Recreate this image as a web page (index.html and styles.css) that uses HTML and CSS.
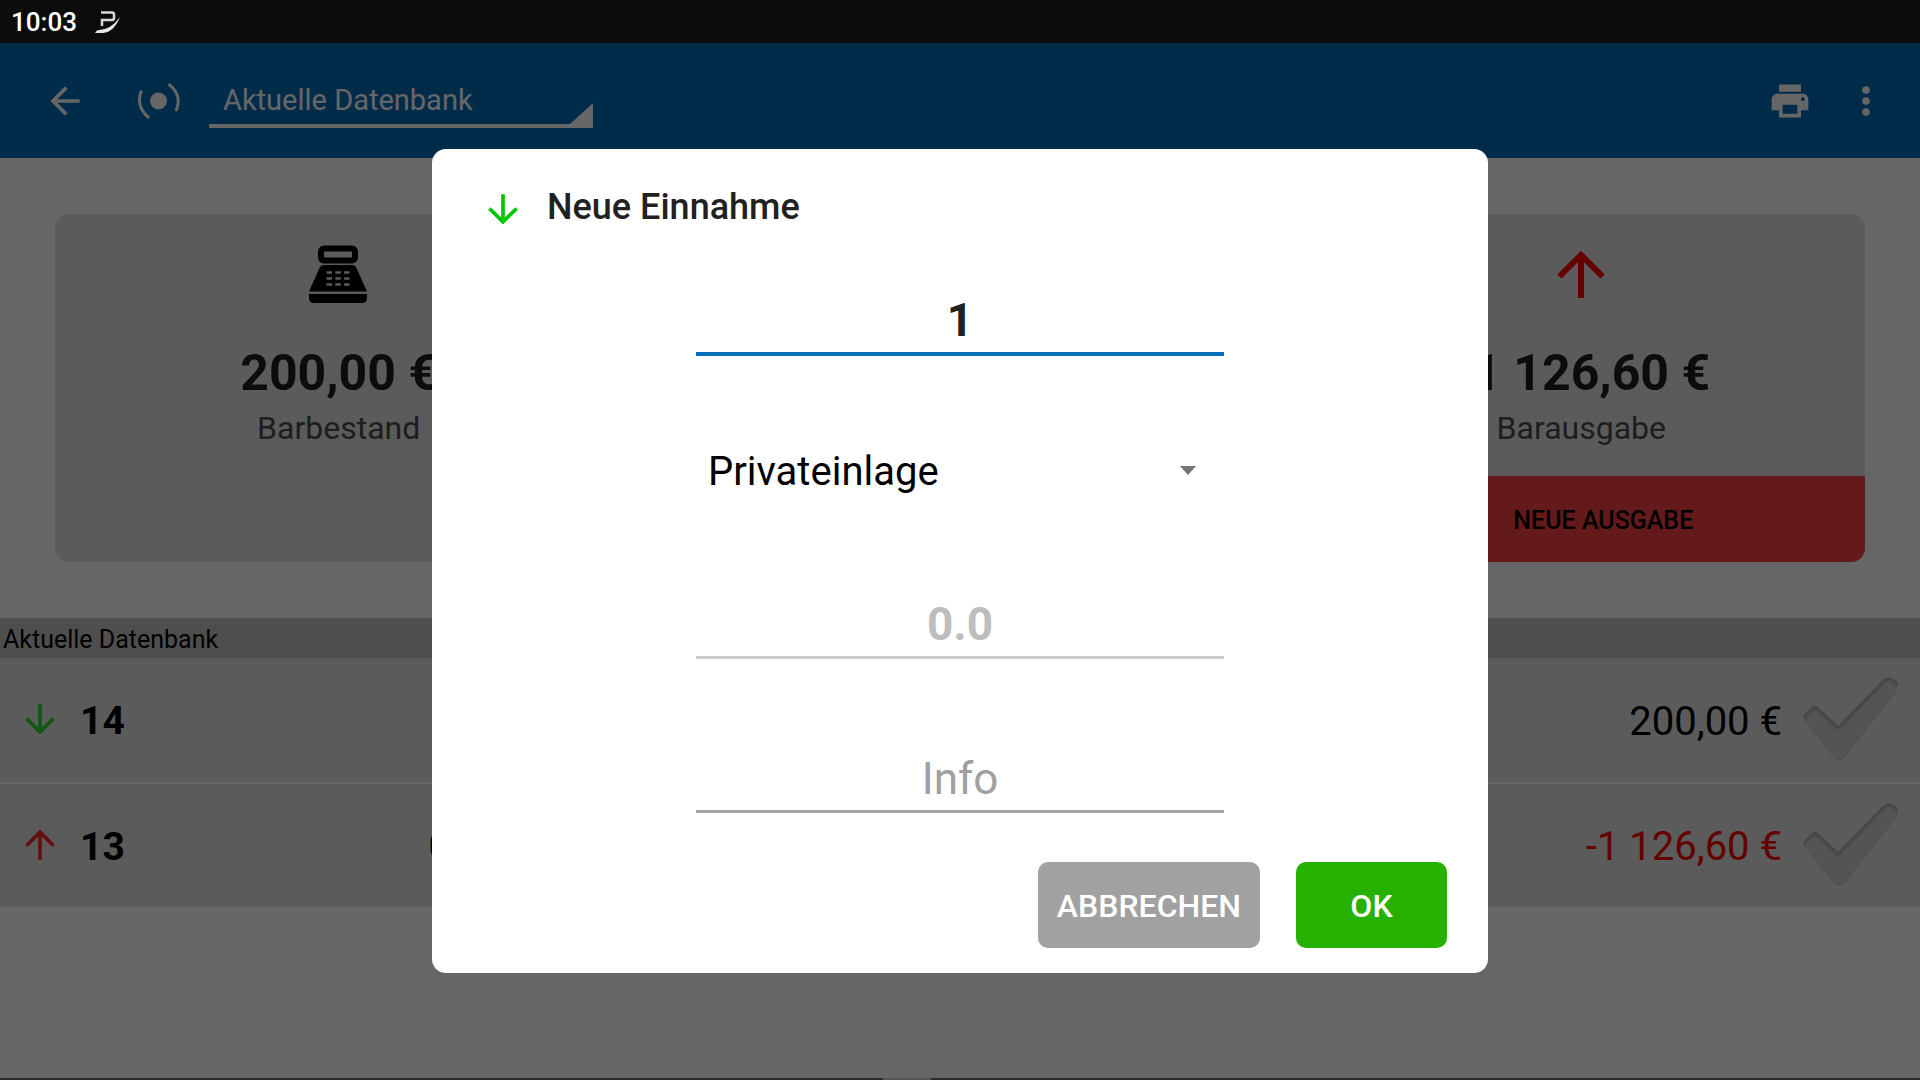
FILE: index.html
```html
<!DOCTYPE html>
<html lang="de">
<head>
<meta charset="utf-8">
<meta name="viewport" content="width=device-width, initial-scale=1">
<title>Neue Einnahme</title>
<link rel="stylesheet" href="styles.css">
</head>
<body>
<svg class="defs" aria-hidden="true">
  <defs>
    <symbol id="arrow-down" viewBox="0 0 24 24"><path d="M12 4V19M4.6 11.7 12 19 19.400 11.700" fill="none" stroke="currentColor" stroke-width="2"/></symbol>
    <symbol id="arrow-up" viewBox="0 0 24 24"><path d="M12 20V5M4.600 12.400 12 5 19.400 12.400" fill="none" stroke="currentColor" stroke-width="2"/></symbol>
    <filter id="soft" x="-20%" y="-20%" width="140%" height="140%"><feGaussianBlur stdDeviation="1.500"/></filter>
    <clipPath id="check-clip"><path d="M2 44Q-1 40 2 37L8 31Q12 27 16 31L35 49 80 3Q86-2 92 3 98 8 93 15L42 80Q36 86 30 80Z"/></clipPath>
    <symbol id="check" viewBox="-2 -2 102 90">
      <path d="M31 82Q37 88 43 82L96 15" fill="none" stroke="#eaeaea" stroke-width="2" filter="url(#soft)"/>
      <g clip-path="url(#check-clip)">
        <rect x="-2" y="-2" width="102" height="90" fill="#d3d3d3"/>
        <path d="M-1 42 2 37 8 31Q12 27 16 31L35 49 80 3Q86-2 92 3L96 8" fill="none" stroke="#acacac" stroke-width="6" filter="url(#soft)"/>
        <path d="M0 42 30 81Q36 86 42 80L96 11" fill="none" stroke="#c4c4c4" stroke-width="2" filter="url(#soft)"/>
      </g>
    </symbol>
  </defs>
</svg>

<header class="status">
  <span>10:03</span>
  <svg class="status-logo" viewBox="0 0 26 22" aria-hidden="true">
    <path d="M6 1.500H17Q19 1.500 19 3.500V7Q19 9 17 9H7V15" fill="none" stroke="#d8d8d8" stroke-width="2.500"/>
    <path d="M0 22 2 19.500Q16 19 25 6 19 21 8 22Z" fill="#e8e8e8"/>
  </svg>
</header>

<div class="app">
  <nav class="toolbar">
    <button class="icon-button" type="button" aria-label="Zurück">
      <svg class="icon" viewBox="0 0 24 24"><path d="M20 11H7.830l5.590-5.590L12 4l-8 8 8 8 1.410-1.410L7.830 13H20z" fill="currentColor"/></svg>
    </button>
    <svg class="icon icon-signal" viewBox="0 0 44 44" aria-hidden="true">
      <circle cx="21.500" cy="22" r="8.500" fill="currentColor"/>
      <path d="M4.500 11.500Q-2 27 12 39M31.500 5Q46 16 39 32" fill="none" stroke="currentColor" stroke-width="3"/>
    </svg>
    <div class="spinner">
      <select class="spinner-select" aria-label="Datenbank"><option>Aktuelle Datenbank</option></select>
      <svg class="spinner-corner" viewBox="0 0 24 25" aria-hidden="true"><path d="M0 22 24 0V23Q24 25 22 25H0Z" fill="currentColor"/></svg>
    </div>
    <div class="actions">
      <button class="icon-button" type="button" aria-label="Drucken">
        <svg class="icon" viewBox="0 0 24 24"><path d="M19 8H5c-1.660 0-3 1.340-3 3v6h4v4h12v-4h4v-6c0-1.660-1.340-3-3-3zm-3 11H8v-5h8v5zm3-7c-.550 0-1-.450-1-1s.450-1 1-1 1 .450 1 1-.450 1-1 1zm-1-9H6v4h12V3z" fill="currentColor"/></svg>
      </button>
      <button class="icon-button" type="button" aria-label="Menü">
        <svg class="icon" viewBox="0 0 24 24"><g fill="currentColor"><circle cx="12" cy="6" r="2.100"/><circle cx="12" cy="12" r="2.100"/><circle cx="12" cy="18" r="2.100"/></g></svg>
      </button>
    </div>
  </nav>

  <main class="content">
    <section class="cards">
      <article class="card">
        <svg class="card-icon" viewBox="0 0 60 60" aria-hidden="true">
          <rect x="12" y="3.500" width="34" height="12" rx="3" fill="none" stroke="#000" stroke-width="6"/>
          <path d="M15 20H43Q46 20 47.500 23L58 46.500H0L10.500 23Q12 20 15 20Z"/>
          <path d="M0 49H58V53Q58 58 53 58H5Q0 58 0 53Z"/>
          <path d="M17.500 27.500H40.500M17.500 33.500H40.500M17.500 39.500H40.500" stroke="#e4e4e4" stroke-width="2.500" stroke-dasharray="5.500 3.300"/>
        </svg>
        <strong class="card-value">200,00 €</strong>
        <span class="card-label">Barbestand</span>
      </article>
      <article class="card"></article>
      <article class="card">
        <svg class="card-icon card-icon-out" viewBox="0 0 60 60" aria-hidden="true"><path d="M30 53V11M8.500 31.500 30 10 51.500 31.500" fill="none" stroke="currentColor" stroke-width="6"/></svg>
        <strong class="card-value">-1 126,60 €</strong>
        <span class="card-label">Barausgabe</span>
        <button class="card-button" type="button">NEUE AUSGABE</button>
      </article>
    </section>

    <h2 class="list-title">Aktuelle Datenbank</h2>
    <table class="list">
      <colgroup><col class="col-icon"><col class="col-number"><col class="col-date"><col><col class="col-check"></colgroup>
      <tbody>
        <tr>
          <td class="cell-icon"><svg class="row-icon row-in"><use href="#arrow-down"/></svg></td>
          <th class="cell-number" scope="row">14</th>
          <td class="cell-date">1</td>
          <td class="cell-amount">200,00 €</td>
          <td class="cell-check"><svg class="check"><use href="#check"/></svg></td>
        </tr>
        <tr>
          <td class="cell-icon"><svg class="row-icon row-out"><use href="#arrow-up"/></svg></td>
          <th class="cell-number" scope="row">13</th>
          <td class="cell-date">0</td>
          <td class="cell-amount cell-negative">-1 126,60 €</td>
          <td class="cell-check"><svg class="check"><use href="#check"/></svg></td>
        </tr>
      </tbody>
    </table>
  </main>

  <div class="scrim">
    <form class="dialog" role="dialog" aria-labelledby="dialog-title">
      <div class="dialog-head">
        <svg class="icon dialog-icon"><use href="#arrow-down"/></svg>
        <h1 class="dialog-title" id="dialog-title">Neue Einnahme</h1>
      </div>
      <div class="fields">
        <input class="field field-active" type="text" value="1" aria-label="Nummer">
        <div class="choice">
          <select class="choice-select" aria-label="Art"><option>Privateinlage</option></select>
          <svg class="choice-arrow" viewBox="0 0 16 9" aria-hidden="true"><path d="M0 0H16L8 9Z" fill="currentColor"/></svg>
        </div>
        <input class="field field-amount" type="text" placeholder="0.0" aria-label="Betrag">
        <input class="field field-info" type="text" placeholder="Info" aria-label="Info">
      </div>
      <div class="dialog-actions">
        <button class="button button-cancel" type="button">ABBRECHEN</button>
        <button class="button button-ok" type="button">OK</button>
      </div>
    </form>
  </div>
</div>
<footer class="nav-edge"><span class="nav-handle"></span></footer>
</body>
</html>
```

FILE: styles.css
```css
*,
*::before,
*::after {
  box-sizing: border-box;
}

body {
  margin: 0;
  min-height: 100vh;
  display: flex;
  flex-direction: column;
  font-family: Roboto, "Liberation Sans", sans-serif;
  background: #fff;
  color: #000;
}

button,
input,
select {
  margin: 0;
  padding: 0;
  border: 0;
  border-radius: 0;
  background: none;
  font: inherit;
  color: inherit;
  outline: none;
  appearance: none;
}

svg {
  display: block;
}

.defs {
  position: absolute;
  width: 0;
  height: 0;
}

.status {
  display: flex;
  align-items: center;
  gap: 18px;
  height: 43px;
  padding: 1px 11px 0;
  background: #0c0c0c;
  color: #fff;
  font-size: 26px;
  font-weight: 500;
}

.status-logo {
  width: 26px;
  height: 22px;
}

.app {
  position: relative;
  flex: 1;
  display: flex;
  flex-direction: column;
}

.toolbar {
  display: flex;
  align-items: center;
  height: 115px;
  padding: 0 32px 0 43px;
  background: #006eb7;
  color: #fff;
}

.icon {
  width: 44px;
  height: 44px;
}

.icon-signal {
  margin: 0 28px 0 50px;
}

.spinner {
  position: relative;
  width: 20vw;
}

.spinner-select {
  display: block;
  width: 100%;
  padding: 2px 14px 0;
  border-bottom: 4px solid #fff;
  font-size: 29px;
  line-height: 48px;
}

.spinner-corner {
  position: absolute;
  right: 0;
  bottom: 0;
  width: 24px;
  height: 25px;
}

.actions {
  display: flex;
  gap: 32px;
  margin-left: auto;
}

.content {
  padding-top: 56px;
}

.cards {
  display: grid;
  grid-template-columns: repeat(3, 1fr);
  gap: 54px;
  padding: 0 55px;
}

.card {
  display: flex;
  flex-direction: column;
  align-items: center;
  padding-top: 31px;
  border-radius: 14px;
  background: #e4e4e4;
  overflow: hidden;
}

.card-icon {
  width: 60px;
  height: 60px;
}

.card-icon-out {
  color: #fa0000;
}

.card-value {
  margin-top: 38px;
  font-size: 50px;
  line-height: 60px;
  color: #1e1e1e;
}

.card-label {
  margin-top: 5px;
  font-size: 32px;
  line-height: 40px;
  color: #4d4d4d;
}

.card-button {
  align-self: stretch;
  height: 86px;
  margin-top: 28px;
  padding: 2px 0 0 44px;
  background: #fa4343;
  font-size: 25px;
  font-weight: 500;
}

.list-title {
  margin: 56px 0 0;
  padding: 4px 3px 0;
  background: #c3c3c3;
  font-size: 25px;
  font-weight: 400;
  line-height: 36px;
}

.list {
  width: 100%;
  table-layout: fixed;
  border-collapse: collapse;
  font-size: 40px;
}

.list tr {
  height: 125px;
  background: #e4e4e4;
  border-bottom: 2px solid #fff;
}

.list td,
.list th {
  padding: 2px 0 0;
  text-align: left;
}

.col-icon {
  width: 80px;
}

.col-number {
  width: 18%;
}

.col-check {
  width: 138px;
}

.list .cell-icon {
  padding: 0 0 2px 18px;
}

.list .cell-number {
  font-size: 39px;
}

.list .cell-date {
  padding-left: 3px;
  font-weight: 500;
}

.list .cell-amount {
  text-align: right;
}

.cell-negative {
  color: #fa0000;
}

.list .cell-check {
  padding: 0 0 0 19px;
}

.row-icon {
  width: 44px;
  height: 44px;
}

.row-in {
  color: #26dc26;
}

.row-out {
  color: #fa2828;
}

.check {
  width: 102px;
  height: 90px;
}

.scrim {
  position: absolute;
  inset: 0;
  display: flex;
  align-items: center;
  justify-content: center;
  background: rgba(0, 0, 0, 0.6);
}

.dialog {
  width: 55%;
  padding: 38px 0 25px;
  border-radius: 14px;
  background: #fff;
}

.dialog-head {
  display: flex;
  align-items: flex-start;
  gap: 22px;
  padding-left: 49px;
}

.dialog-icon {
  color: #00c800;
}

.dialog-title {
  margin: 0;
  font-size: 36px;
  font-weight: 500;
  line-height: 40px;
  color: #212121;
}

.fields {
  display: grid;
  gap: 92px;
  width: 50%;
  margin: 62px auto 0;
}

.field {
  display: block;
  width: 100%;
  height: 62px;
  padding-bottom: 5px;
  border-bottom: 3px solid #ccc;
  text-align: center;
  font-size: 46px;
  font-weight: 700;
  color: #212121;
}

.field::placeholder {
  color: #bdbdbd;
  opacity: 1;
}

.field-active {
  height: 63px;
  border-bottom: 4px solid #006eb9;
}

.field-info {
  padding-bottom: 3px;
  border-bottom-color: #a6a6a6;
  font-size: 44px;
  font-weight: 400;
}

.field-info::placeholder {
  color: #a0a0a0;
}

.choice {
  position: relative;
}

.choice-select {
  display: block;
  width: 100%;
  padding: 0 12px 9px;
  font-size: 40px;
  line-height: 48px;
}

.choice-arrow {
  position: absolute;
  top: 18px;
  right: 28px;
  width: 16px;
  height: 9px;
  color: #757575;
}

.dialog-actions {
  display: flex;
  justify-content: flex-end;
  gap: 36px;
  margin-top: 49px;
  padding-right: 41px;
}

.button {
  min-width: 151px;
  height: 86px;
  padding: 3px 19px 0;
  border-radius: 10px;
  color: #fff;
  font-size: 32px;
  font-weight: 500;
}

.button-cancel {
  background: #a1a1a1;
}

.button-ok {
  background: #26b000;
}

.nav-edge {
  height: 2px;
  background: #2d2a2c;
}

.nav-handle {
  display: block;
  width: 48px;
  height: 2px;
  margin-left: 46%;
  background: #5b5557;
}
```
